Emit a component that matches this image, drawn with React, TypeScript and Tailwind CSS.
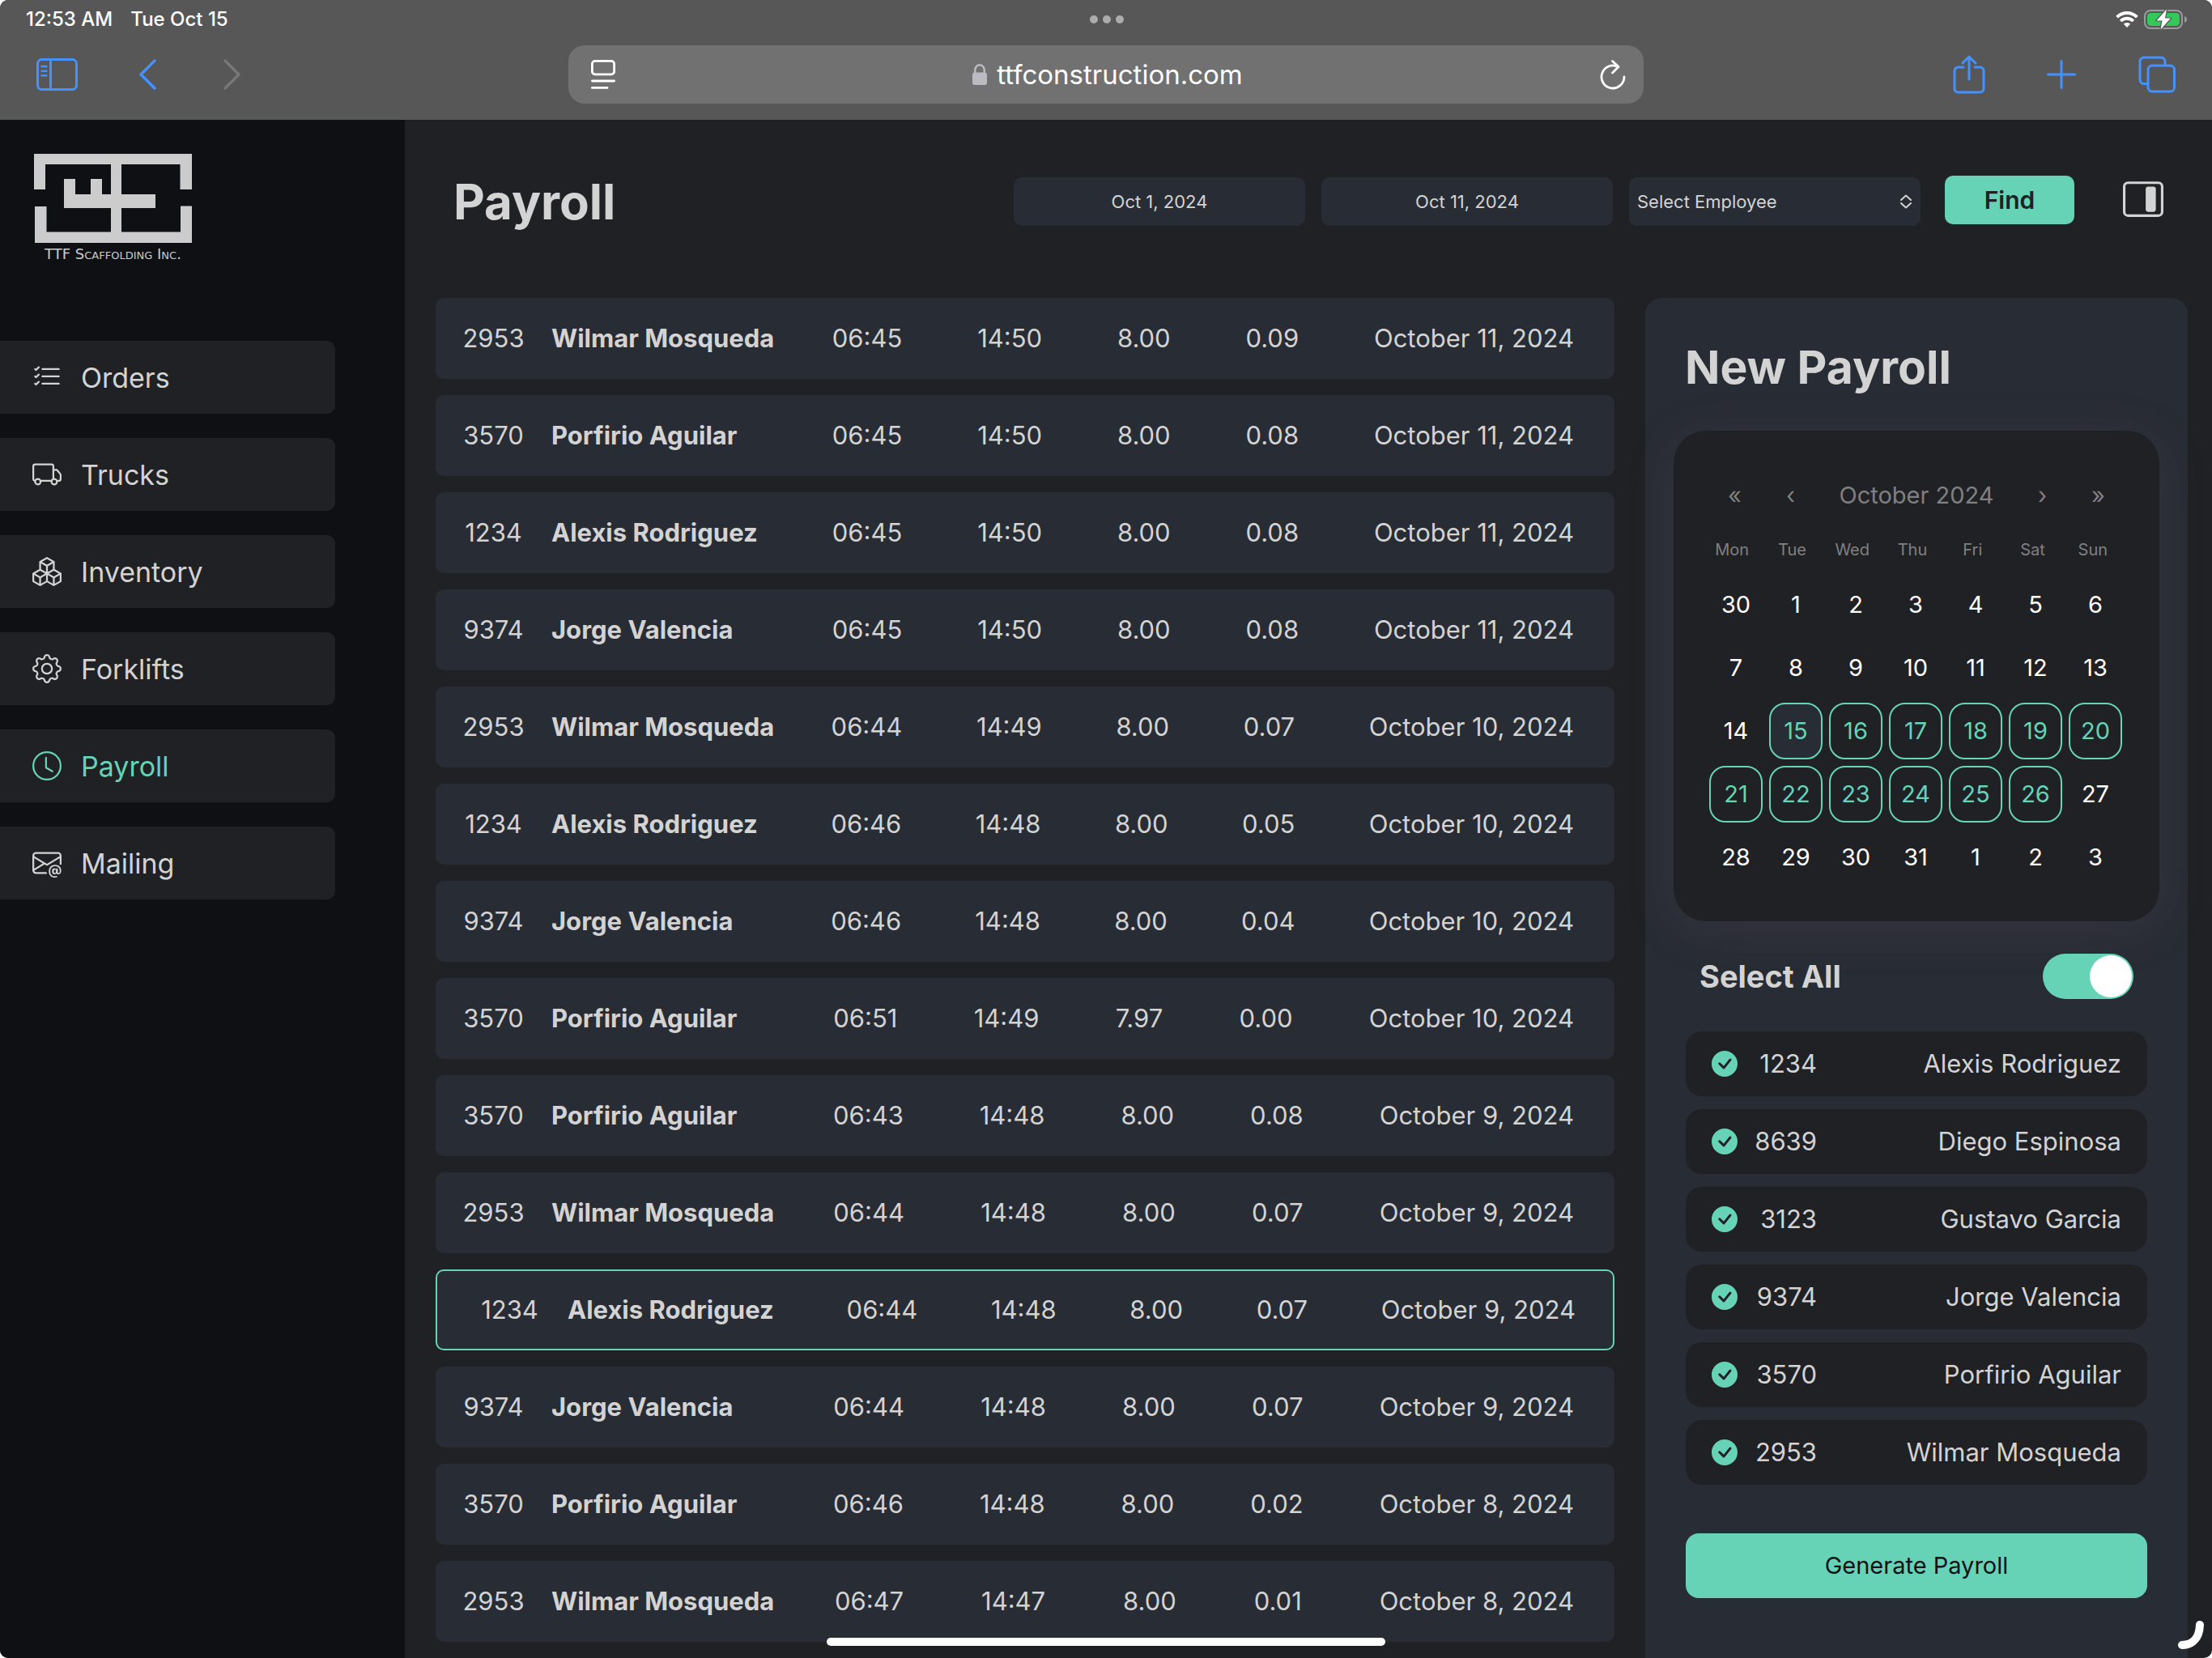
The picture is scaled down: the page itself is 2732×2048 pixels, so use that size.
import React, { useState } from "react";
import {
  BsBoxes,
  BsCheckCircleFill,
  BsClock,
  BsEnvelopeAt,
  BsGear,
  BsLayoutSidebarInsetReverse,
  BsListCheck,
  BsTruck,
} from "react-icons/bs";
import type { IconType } from "react-icons";

type Entry = {
  id: string;
  name: string;
  start: string;
  end: string;
  hours: string;
  extra: string;
  date: string;
  selected?: boolean;
};

const ENTRIES: Entry[] = [
  { id: "2953", name: "Wilmar Mosqueda", start: "06:45", end: "14:50", hours: "8.00", extra: "0.09", date: "October 11, 2024" },
  { id: "3570", name: "Porfirio Aguilar", start: "06:45", end: "14:50", hours: "8.00", extra: "0.08", date: "October 11, 2024" },
  { id: "1234", name: "Alexis Rodriguez", start: "06:45", end: "14:50", hours: "8.00", extra: "0.08", date: "October 11, 2024" },
  { id: "9374", name: "Jorge Valencia", start: "06:45", end: "14:50", hours: "8.00", extra: "0.08", date: "October 11, 2024" },
  { id: "2953", name: "Wilmar Mosqueda", start: "06:44", end: "14:49", hours: "8.00", extra: "0.07", date: "October 10, 2024" },
  { id: "1234", name: "Alexis Rodriguez", start: "06:46", end: "14:48", hours: "8.00", extra: "0.05", date: "October 10, 2024" },
  { id: "9374", name: "Jorge Valencia", start: "06:46", end: "14:48", hours: "8.00", extra: "0.04", date: "October 10, 2024" },
  { id: "3570", name: "Porfirio Aguilar", start: "06:51", end: "14:49", hours: "7.97", extra: "0.00", date: "October 10, 2024" },
  { id: "3570", name: "Porfirio Aguilar", start: "06:43", end: "14:48", hours: "8.00", extra: "0.08", date: "October 9, 2024" },
  { id: "2953", name: "Wilmar Mosqueda", start: "06:44", end: "14:48", hours: "8.00", extra: "0.07", date: "October 9, 2024" },
  { id: "1234", name: "Alexis Rodriguez", start: "06:44", end: "14:48", hours: "8.00", extra: "0.07", date: "October 9, 2024", selected: true },
  { id: "9374", name: "Jorge Valencia", start: "06:44", end: "14:48", hours: "8.00", extra: "0.07", date: "October 9, 2024" },
  { id: "3570", name: "Porfirio Aguilar", start: "06:46", end: "14:48", hours: "8.00", extra: "0.02", date: "October 8, 2024" },
  { id: "2953", name: "Wilmar Mosqueda", start: "06:47", end: "14:47", hours: "8.00", extra: "0.01", date: "October 8, 2024" },
];

const NAV: { label: string; icon: IconType; active?: boolean }[] = [
  { label: "Orders", icon: BsListCheck },
  { label: "Trucks", icon: BsTruck },
  { label: "Inventory", icon: BsBoxes },
  { label: "Forklifts", icon: BsGear },
  { label: "Payroll", icon: BsClock, active: true },
  { label: "Mailing", icon: BsEnvelopeAt },
];

const EMPLOYEES = [
  { id: "1234", name: "Alexis Rodriguez" },
  { id: "8639", name: "Diego Espinosa" },
  { id: "3123", name: "Gustavo Garcia" },
  { id: "9374", name: "Jorge Valencia" },
  { id: "3570", name: "Porfirio Aguilar" },
  { id: "2953", name: "Wilmar Mosqueda" },
];

const WEEKDAYS = ["Mon", "Tue", "Wed", "Thu", "Fri", "Sat", "Sun"];
const DAYS = [
  30, 1, 2, 3, 4, 5, 6, 7, 8, 9, 10, 11, 12, 13, 14, 15, 16, 17, 18, 19, 20, 21,
  22, 23, 24, 25, 26, 27, 28, 29, 30, 31, 1, 2, 3,
];
const RANGE_START = 15;
const RANGE_END = 26;

function Wifi() {
  return (
    <svg viewBox="0 0 28 20" className="h-5 w-7" fill="none" stroke="white" aria-hidden="true">
      <path d="M1.6 7.2a17.6 17.6 0 0 1 24.8 0" strokeWidth="4" />
      <path d="M6.2 12a11 11 0 0 1 15.6 0" strokeWidth="3.8" />
      <path d="M14 20l-4.2-4.4a6 6 0 0 1 8.4 0z" fill="white" stroke="none" />
    </svg>
  );
}

function Battery() {
  return (
    <svg viewBox="0 0 54 26" className="h-[26px] w-[54px]" fill="none" aria-hidden="true">
      <rect x="1" y="2" width="46" height="22" rx="7" stroke="#9b9b9b" strokeWidth="2" />
      <rect x="4" y="5" width="40" height="16" rx="4.5" fill="#34c759" />
      <path d="M50 9c2.2.8 3 2.200 3 4s-.8 3.200-3 4z" fill="#9b9b9b" />
      <path
        d="M28 0.500L15.500 14.400h7L20.500 25.500L33 11.600h-7z"
        fill="white"
        stroke="#575757"
        strokeWidth="2.400"
        paintOrder="stroke"
        strokeLinejoin="round"
      />
    </svg>
  );
}

function BrowserBar() {
  return (
    <header className="bg-[#575757] text-white">
      <div className="grid h-12 grid-cols-3 items-center pr-[30px] pl-8">
        <div className="flex gap-[22px] text-2xl leading-6 font-medium whitespace-nowrap">
          <span>12:53 AM</span>
          <span>Tue Oct 15</span>
        </div>
        <div className="flex justify-center gap-1.5">
          <span className="size-2.5 rounded-full bg-[#acacac]" />
          <span className="size-2.5 rounded-full bg-[#acacac]" />
          <span className="size-2.5 rounded-full bg-[#acacac]" />
        </div>
        <div className="flex items-center justify-end gap-[7px]">
          <Wifi />
          <Battery />
        </div>
      </div>
      <div className="flex h-[100px] items-start gap-[60px] px-[45px] pt-2">
        <div className="flex h-[72px] flex-1 items-center text-[#4592ff]">
          <button type="button" aria-label="Show sidebar">
            <svg viewBox="0 0 52 40" className="h-10 w-[52px]" fill="none" stroke="currentColor" strokeWidth="3">
              <rect x="1.500" y="1.500" width="48" height="37" rx="5" />
              <path d="M17.500 1.500v37" />
              <path d="M6.500 10h6M6.500 15.700h6M6.500 21.400h6" strokeWidth="2.400" strokeLinecap="round" />
            </svg>
          </button>
          <button type="button" aria-label="Back" className="ml-[73px]">
            <svg viewBox="0 0 24 38" className="h-[38px] w-6" fill="none" stroke="currentColor" strokeWidth="3.400" strokeLinecap="round" strokeLinejoin="round">
              <path d="M21 2L4 19l17 17" />
            </svg>
          </button>
          <button type="button" aria-label="Forward" disabled className="ml-20 text-[#777777]">
            <svg viewBox="0 0 24 38" className="h-[38px] w-6" fill="none" stroke="currentColor" strokeWidth="3.400" strokeLinecap="round" strokeLinejoin="round">
              <path d="M4 2l17 17L4 36" />
            </svg>
          </button>
        </div>
        <div className="flex h-[72px] w-[1328px] items-center justify-between rounded-[20px] bg-[#717171] pr-[22px] pl-7">
          <button type="button" aria-label="Page settings">
            <svg viewBox="0 0 30 36" className="h-9 w-[30px]" fill="none" stroke="currentColor" strokeWidth="2.800" strokeLinecap="round">
              <rect x="1.400" y="1.400" width="27.200" height="16.400" rx="3.500" />
              <path d="M1.400 26h27.200M1.400 34.400h18.600" />
            </svg>
          </button>
          <div className="flex items-center gap-3">
            <svg viewBox="0 0 18 26" className="h-[26px] w-[18px]" aria-hidden="true">
              <path d="M3.300 12V7.500a5.700 6.200 0 0 1 11.400 0V12" fill="none" stroke="#bcbbc1" strokeWidth="2.400" />
              <rect y="10.500" width="18" height="15.500" rx="3" fill="#bcbbc1" />
            </svg>
            <input
              aria-label="Address"
              defaultValue="ttfconstruction.com"
              className="field-sizing-content bg-transparent text-[33px] leading-10 outline-none"
            />
          </div>
          <button type="button" aria-label="Reload">
            <svg viewBox="0 0 32 38" className="h-[38px] w-8" fill="none" stroke="currentColor" strokeWidth="2.800" strokeLinecap="round" strokeLinejoin="round">
              <path d="M30 22a14 14 0 1 1-7.500-12.400" />
              <path d="M15.500 2.500l7.500 7-7.500 7.500" />
            </svg>
          </button>
        </div>
        <div className="flex h-[72px] flex-1 items-center justify-end text-[#4592ff]">
          <button type="button" aria-label="Share">
            <svg viewBox="0 0 40 48" className="h-12 w-10" fill="none" stroke="currentColor" strokeWidth="3" strokeLinecap="round" strokeLinejoin="round">
              <path d="M13 15H6.500a4.500 4.500 0 0 0-4.500 4.500v22a4.500 4.500 0 0 0 4.500 4.500h27a4.500 4.500 0 0 0 4.500-4.500v-22a4.500 4.500 0 0 0-4.500-4.500H27" />
              <path d="M20 30V2M12 10l8-8 8 8" />
            </svg>
          </button>
          <button type="button" aria-label="New tab" className="ml-[76px]">
            <svg viewBox="0 0 36 36" className="size-9" fill="none" stroke="currentColor" strokeWidth="3" strokeLinecap="round">
              <path d="M18 1.500v33M1.500 18h33" />
            </svg>
          </button>
          <button type="button" aria-label="Tabs" className="ml-[77px]">
            <svg viewBox="0 0 46 46" className="size-[46px]" fill="none" stroke="currentColor" strokeWidth="3">
              <rect x="12" y="12" width="32.500" height="32" rx="5" />
              <path d="M12 34.500H7a5 5 0 0 1-5-5V7a5 5 0 0 1 5-5h21a5 5 0 0 1 5 5v5" />
            </svg>
          </button>
        </div>
      </div>
    </header>
  );
}

function Logo() {
  return (
    <div className="flex w-[195px] flex-col items-center gap-1">
      <svg viewBox="0 0 195 110" className="w-full" fill="#cccccc" aria-hidden="true">
        <path d="M0 0h195v44h-14.500V13H14v31H0z" />
        <path d="M1 65h14.500v31.500h165.500V64.500H195V110H1z" />
        <path d="M95 0h13v110H95z" />
        <path d="M37 31h14v19h19V31h14v19h66v17H37z" />
      </svg>
      <span className="font-['DejaVu_Sans',sans-serif] text-lg leading-5 whitespace-nowrap text-[#cccccc] [font-variant-caps:small-caps]">
        TTF Scaffolding Inc.
      </span>
    </div>
  );
}

function Sidebar() {
  return (
    <aside className="flex w-[500px] shrink-0 flex-col gap-[97px] bg-[#0f1014] pt-[42px]">
      <div className="h-[134px] pl-[42px]">
        <Logo />
      </div>
      <nav className="flex flex-col gap-[30px] pr-[86px]">
        {NAV.map(({ label, icon: Icon, active }) => (
          <a
            key={label}
            href="#"
            aria-current={active ? "page" : undefined}
            className={
              active
                ? "flex h-[90px] items-center gap-6 rounded-r-[10px] bg-[#202124] pl-10 text-[34px] text-[#66d3b7]"
                : "flex h-[90px] items-center gap-6 rounded-r-[10px] bg-[#202124] pl-10 text-[34px] text-[#d3d3d3]"
            }
          >
            <Icon className="size-9" />
            {label}
          </a>
        ))}
      </nav>
    </aside>
  );
}

function Toolbar() {
  return (
    <div className="mb-[18px] flex h-[202px] items-center justify-between pr-[30px] pl-[22px]">
      <h1 className="text-[60px] leading-[60px] font-bold">Payroll</h1>
      <form className="flex items-center gap-5 text-[22px]" onSubmit={(e) => e.preventDefault()}>
        <input
          aria-label="From date"
          defaultValue="Oct 1, 2024"
          className="h-[60px] w-[360px] rounded-[10px] bg-[#282c34] text-center outline-none"
        />
        <input
          aria-label="To date"
          defaultValue="Oct 11, 2024"
          className="h-[60px] w-[360px] rounded-[10px] bg-[#282c34] text-center outline-none"
        />
        <div className="grid h-[60px] w-[360px] items-center">
          <select
            aria-label="Employee"
            className="col-start-1 row-start-1 h-full w-full appearance-none rounded-[10px] bg-[#282c34] pl-2.5 outline-none"
          >
            <option>Select Employee</option>
          </select>
          <svg
            viewBox="0 0 16 18"
            className="pointer-events-none col-start-1 row-start-1 mr-2.5 h-[18px] w-4 justify-self-end"
            fill="none"
            stroke="currentColor"
            strokeWidth="2"
            strokeLinecap="round"
            strokeLinejoin="round"
            aria-hidden="true"
          >
            <path d="M2 7l6-5.500L14 7M2 11l6 5.500 6-5.500" />
          </svg>
        </div>
        <button
          type="submit"
          className="mb-1 ml-2.5 h-[60px] w-40 rounded-[10px] bg-[#66d3b7] text-[30px] font-semibold text-[#202124]"
        >
          Find
        </button>
        <button type="button" aria-label="Toggle side panel" className="mb-1.5 ml-10">
          <BsLayoutSidebarInsetReverse className="size-[50px]" />
        </button>
      </form>
    </div>
  );
}

function EntryTable() {
  return (
    <table className="block min-w-0 flex-1 text-[31px]">
      <tbody className="flex flex-col gap-5">
        {ENTRIES.map((e, i) => (
          <tr
            key={i}
            className={
              e.selected
                ? "flex h-[100px] items-center rounded-[10px] bg-[#282c34] pr-12 pl-5 whitespace-nowrap inset-ring-2 inset-ring-[#66d3b7]"
                : "flex h-[100px] items-center rounded-[10px] bg-[#282c34] pr-[50px] whitespace-nowrap"
            }
          >
            <td className="w-[143px] shrink-0 text-center">{e.id}</td>
            <td className="w-[254px] shrink-0 font-bold">{e.name}</td>
            <td className="ml-auto">{e.start}</td>
            <td className="ml-auto">{e.end}</td>
            <td className="ml-auto">{e.hours}</td>
            <td className="ml-auto">{e.extra}</td>
            <td className="ml-auto">{e.date}</td>
          </tr>
        ))}
      </tbody>
    </table>
  );
}

function Calendar() {
  const navButton = "w-[69px]";
  return (
    <section
      aria-label="Pay period"
      className="rounded-[40px] bg-[#202124] pt-9 pb-11 shadow-[0_10px_60px_rgba(100,90,115,0.2)]"
    >
      <div className="flex h-[88px] items-center px-[41px] text-[29px] text-[#808080]">
        <button type="button" aria-label="Previous year" className={navButton}>«</button>
        <button type="button" aria-label="Previous month" className={navButton}>‹</button>
        <button type="button" className="flex-1 whitespace-nowrap">October 2024</button>
        <button type="button" aria-label="Next month" className={navButton}>›</button>
        <button type="button" aria-label="Next year" className={navButton}>»</button>
      </div>
      <div className="grid h-[46px] grid-cols-7 items-center pr-[45px] pl-[35px] text-center text-xl text-[#808080]">
        {WEEKDAYS.map((d) => (
          <span key={d}>{d}</span>
        ))}
      </div>
      <div className="mt-2.5 grid grid-cols-7 gap-2 pr-[46px] pl-[44px] text-[29px]">
        {DAYS.map((d, i) => {
          const inMonth = i > 0 && i < 32;
          const inRange = inMonth && d >= RANGE_START && d <= RANGE_END;
          const style = !inRange
            ? "h-[70px] rounded-[20px] text-white"
            : d === RANGE_START
              ? "h-[70px] rounded-[20px] border-2 border-[#66d3b7] bg-[#282c34] text-[#66d3b7]"
              : "h-[70px] rounded-[20px] border-2 border-[#66d3b7] text-[#66d3b7]";
          return (
            <button key={i} type="button" className={style}>
              {d}
            </button>
          );
        })}
      </div>
    </section>
  );
}

function NewPayroll() {
  const [picked, setPicked] = useState<string[]>(EMPLOYEES.map((e) => e.id));
  const all = picked.length === EMPLOYEES.length;
  const toggle = (id: string) =>
    setPicked((p) => (p.includes(id) ? p.filter((x) => x !== id) : [...p, id]));

  return (
    <section className="w-[670px] shrink-0 rounded-t-[20px] bg-[#282c34] px-[35px] pt-14 pb-[60px]">
      <h2 className="mb-12 pl-[14px] text-[57px] leading-[60px] font-bold">New Payroll</h2>
      <Calendar />
      <label className="my-10 flex h-14 items-center justify-between px-8 text-[38px] font-bold">
        Select All
        <span className="grid items-center">
          <input
            type="checkbox"
            role="switch"
            checked={all}
            onChange={() => setPicked(all ? [] : EMPLOYEES.map((e) => e.id))}
            className="peer col-start-1 row-start-1 h-14 w-28 appearance-none rounded-full bg-[#4b505a] checked:bg-[#66d3b7]"
          />
          <span className="pointer-events-none col-start-1 row-start-1 mx-0.5 size-[52px] rounded-full bg-white peer-checked:justify-self-end" />
        </span>
      </label>
      <div className="px-[15px]">
        <ul className="flex flex-col gap-4 text-[31px]">
          {EMPLOYEES.map((e) => (
            <li key={e.id}>
              <label className="flex h-20 items-center rounded-[20px] bg-[#202124] px-8">
                <span className="grid">
                  <input
                    type="checkbox"
                    checked={picked.includes(e.id)}
                    onChange={() => toggle(e.id)}
                    className="peer col-start-1 row-start-1 size-8 appearance-none rounded-full"
                  />
                  <BsCheckCircleFill className="pointer-events-none invisible col-start-1 row-start-1 size-8 text-[#66d3b7] peer-checked:visible" />
                </span>
                <span className="w-[98px] text-right">{e.id}</span>
                <span className="flex-1 text-right whitespace-nowrap">{e.name}</span>
              </label>
            </li>
          ))}
        </ul>
        <button type="button" className="mt-[60px] h-20 w-full rounded-2xl bg-[#66d3b7] text-[29px] text-[#111216]">
          Generate Payroll
        </button>
      </div>
    </section>
  );
}

export default function App() {
  return (
    <div className="relative flex min-h-screen flex-col overflow-hidden rounded-[10px] bg-[#202124] font-['Inter',sans-serif] text-[#d3d3d3]">
      <BrowserBar />
      <div className="flex flex-1">
        <Sidebar />
        <main className="flex min-w-0 flex-1 flex-col pr-[30px] pl-[38px]">
          <Toolbar />
          <div className="flex flex-1 gap-[38px]">
            <EntryTable />
            <NewPayroll />
          </div>
        </main>
      </div>
      <div className="absolute bottom-[15px] left-1/2 h-2.5 w-[690px] -translate-x-1/2 rounded-full bg-white" />
      <svg viewBox="0 0 40 40" className="absolute right-1.5 bottom-2 size-10" fill="none" stroke="white" strokeWidth="10" strokeLinecap="round" aria-hidden="true">
        <path d="M31 7c-.5 16-9 25-22 25" />
      </svg>
    </div>
  );
}
